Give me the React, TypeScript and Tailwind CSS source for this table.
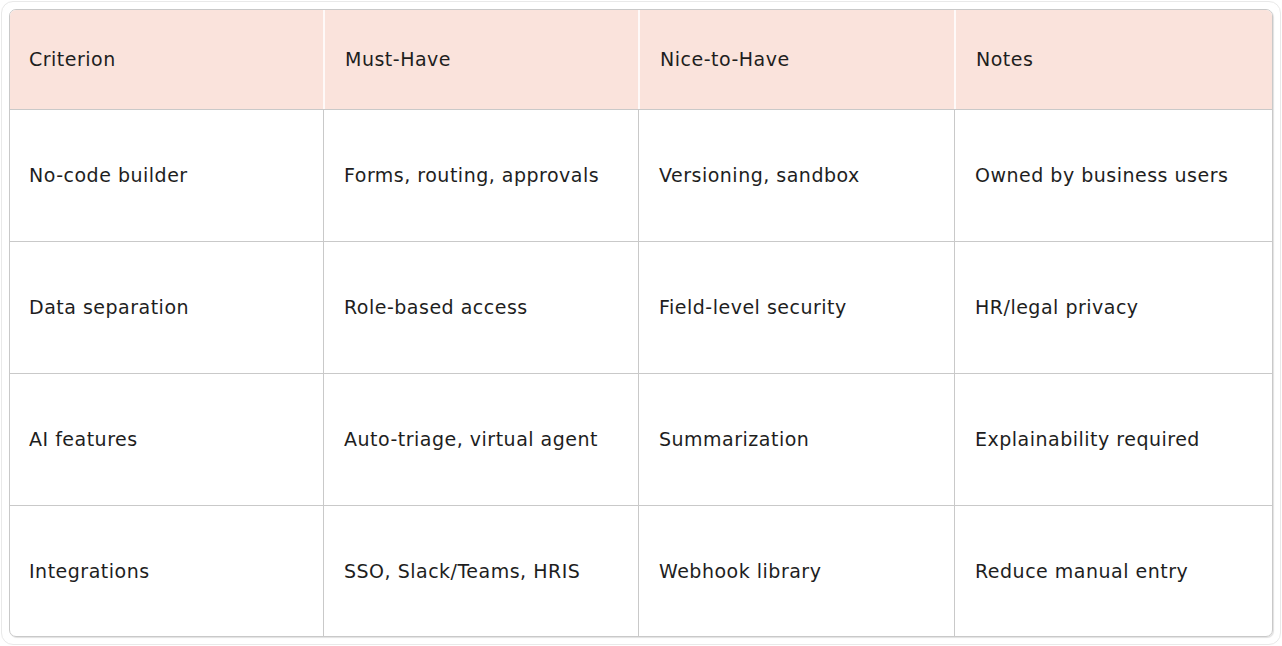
const rows = [
  ["No-code builder", "Forms, routing, approvals", "Versioning, sandbox", "Owned by business users"],
  ["Data separation", "Role-based access", "Field-level security", "HR/legal privacy"],
  ["AI features", "Auto-triage, virtual agent", "Summarization", "Explainability required"],
  ["Integrations", "SSO, Slack/Teams, HRIS", "Webhook library", "Reduce manual entry"],
];

const headers = ["Criterion", "Must-Have", "Nice-to-Have", "Notes"];

export default function App() {
  return (
    <div
      className="w-[1282px] h-[646px] bg-white p-px text-[#1e1e1e]"
      style={{ fontFamily: '"DejaVu Sans", "Liberation Sans", sans-serif' }}
    >
      <div className="h-full rounded-[12px] border border-[#e9e9e9] p-[7px]">
        <div className="h-full overflow-hidden rounded-[7px] border border-[#c9c9c9] shadow-[1px_1px_1px_rgba(0,0,0,0.12)]">
          <div className="grid h-[99px] grid-cols-[313px_315px_316px_1fr] bg-[#fae3dc]">
            {headers.map((h, i) => (
              <div
                key={h}
                className={`flex items-center text-[19px] tracking-[0.5px] ${i > 0 ? "border-l-2 border-white/80 pl-[20px]" : "pl-[19px]"}`}
              >
                {h}
              </div>
            ))}
          </div>
          {rows.map((r, ri) => (
            <div key={ri} className="grid h-[132px] grid-cols-[313px_315px_316px_1fr] border-t border-[#c9c9c9]">
              {r.map((c, ci) => (
                <div
                  key={ci}
                  className={`flex items-center text-[19px] tracking-[0.5px] ${ci > 0 ? "border-l border-[#c9c9c9] pl-[20px]" : "pl-[19px]"}`}
                >
                  {c}
                </div>
              ))}
            </div>
          ))}
        </div>
      </div>
    </div>
  );
}
